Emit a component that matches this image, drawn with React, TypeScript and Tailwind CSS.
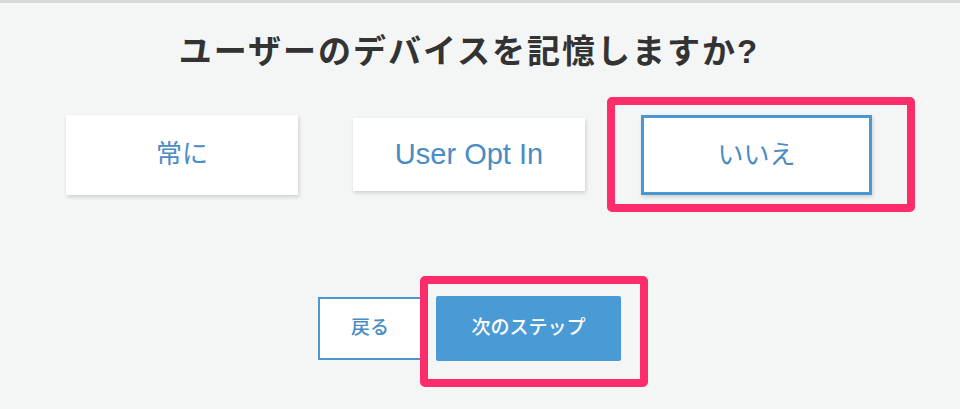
import React from 'react';

const font = { fontFamily: '"Liberation Sans", "Noto Sans CJK JP", sans-serif' };

const Card: React.FC<{ label: string; className?: string }> = ({ label, className }) => (
  <button
    className={`flex items-center justify-center bg-white text-[#4b8cc4] shadow-[1px_2px_4px_rgba(0,0,0,0.16)] ${className ?? ''}`}
  >
    {label}
  </button>
);

export default function App() {
  return (
    <div style={font} className="w-[960px] h-[409px] bg-[#f4f6f6] border-t-[3px] border-[#d8d8d8] overflow-hidden">
      <h1 className="mt-[27px] h-[44px] pr-[22px] text-center text-[33px] leading-[44px] font-bold tracking-[2px] text-[#333]">
        ユーザーのデバイスを記憶しますか?
      </h1>

      <div className="mt-[23px] flex items-center pl-[66px]">
        <Card label="常に" className="w-[232px] h-[80px] text-[26px]" />
        <Card label="User Opt In" className="ml-[55px] w-[232px] h-[73px] text-[29px]" />
        <div className="ml-[22px] rounded-[5px] border-[8px] border-[#fd2d6b] pl-[26px] pr-[35px] pt-[10px] pb-[9px]">
          <Card label="いいえ" className="w-[231px] h-[80px] border-[3px] border-[#4a98d3] text-[26px]" />
        </div>
      </div>

      <div className="mt-[64px] flex items-start pl-[318px]">
        <button className="mt-[21px] w-[104px] h-[63px] border-2 border-[#4a98d3] bg-white text-[19px] font-medium text-[#4b8cc4]">
          戻る
        </button>
        <div className="relative z-10 -ml-[2px] rounded-[5px] border-[8px] border-[#fd2d6b] pl-[8px] pr-[19px] pt-[12px] pb-[18px]">
          <button className="w-[185px] h-[65px] rounded-[2px] bg-[#4a9bd5] text-[19px] font-medium text-white">
            次のステップ
          </button>
        </div>
      </div>
    </div>
  );
}
